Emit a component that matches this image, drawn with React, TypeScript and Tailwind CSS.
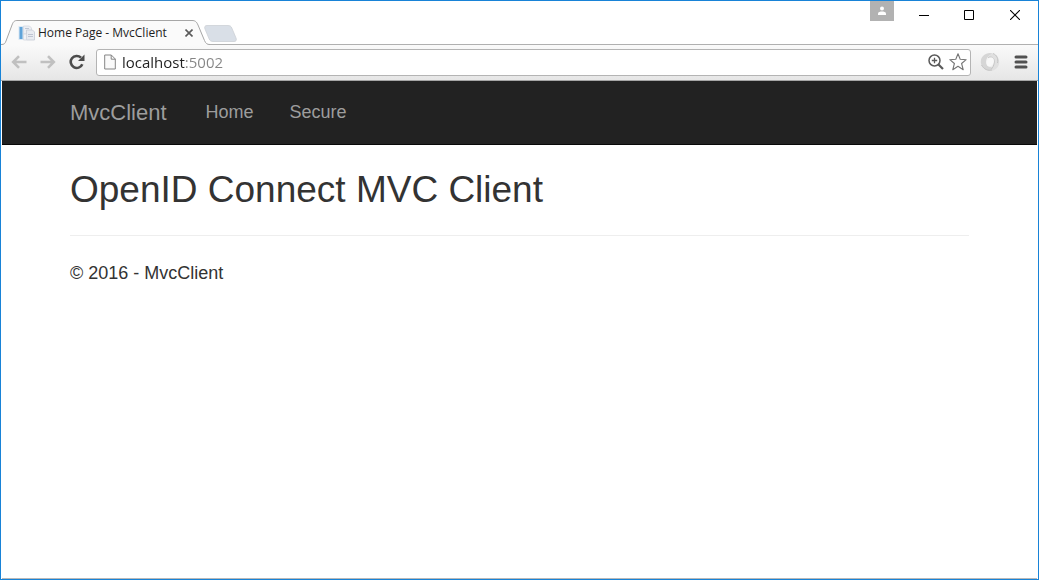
import type { ReactNode } from "react";

const navLinks = [
  { label: "Home", href: "#home" },
  { label: "Secure", href: "#secure" },
];

function ChromeButton({ label, className = "", children }: { label: string; className?: string; children: ReactNode }) {
  return (
    <button type="button" aria-label={label} className={`flex shrink-0 items-center justify-center ${className}`}>
      {children}
    </button>
  );
}

function WindowControls() {
  return (
    <div className="ml-auto flex h-full items-start">
      <ChromeButton label="Profile" className="mr-[7px] h-5 w-6 bg-[#b2b2b2]">
        <svg width="10" height="10" viewBox="0 0 10 10" fill="#fff">
          <circle cx="5" cy="2.6" r="2" />
          <path d="M1 9V7.4C1 6.2 3.4 5.6 5 5.6S9 6.2 9 7.4V9z" />
        </svg>
      </ChromeButton>
      <ChromeButton label="Minimize" className="h-7 w-[46px]">
        <svg width="10" height="10" viewBox="0 0 10 10" fill="none" stroke="#000">
          <path d="M0 5.5h10" />
        </svg>
      </ChromeButton>
      <ChromeButton label="Maximize" className="h-7 w-[45px]">
        <svg width="11" height="11" viewBox="0 0 11 11" fill="none" stroke="#000">
          <path d="M.5 .5h9v9h-9z" />
        </svg>
      </ChromeButton>
      <ChromeButton label="Close" className="h-7 w-[46px]">
        <svg width="10" height="10" viewBox="0 0 10 10" fill="none" stroke="#000" strokeWidth="1.1">
          <path d="M0 0l10 10M10 0l-10 10" />
        </svg>
      </ChromeButton>
    </div>
  );
}

function TabStrip() {
  return (
    <div className="relative z-10 -mb-px flex h-11 items-end">
      <div className="relative flex h-[25px] w-[209px] items-center pl-[17px] pr-[13px]">
        {/* slanted tab outline, open at the bottom so it joins the toolbar */}
        <svg className="absolute inset-0" width="209" height="25" viewBox="0 0 209 25" fill="none">
          <path
            d="M0 24.5C3.5 24.5 4 23.5 5 21L11 5C12.3 1.5 13.5 .5 16 .5H191C194 .5 195.5 1.5 197 5L203.5 20.5C204.8 23.5 206 24.5 209 24.5V25H0z"
            fill="#fafafa"
          />
          <path
            d="M0 24.5C3.5 24.5 4 23.5 5 21L11 5C12.3 1.5 13.5 .5 16 .5H191C194 .5 195.5 1.5 197 5L203.5 20.5C204.8 23.5 206 24.5 209 24.5"
            stroke="#a6a6a6"
          />
        </svg>
        <svg className="relative shrink-0" width="17" height="16" viewBox="0 0 17 16">
          <path d="M.5 1h4.500v14H.5z" fill="#dbe9f5" />
          <path d="M1.500 2h3v12h-3z" fill="#5fa3d9" />
          <path d="M5.5 1h6l2 2v6h-8z" fill="#eceef3" stroke="#d3d7e0" strokeWidth=".8" />
          <path d="M8.5 5h6l2 2v8h-8z" fill="#e8ebf1" stroke="#c5cad6" strokeWidth=".8" />
          <path d="M5.5 9h3v6h-3z" fill="#f1f3f7" stroke="#d3d7e0" strokeWidth=".8" />
          <path d="M7 3.5h4M10 9.5h5M10 11.5h5" stroke="#b9bfce" strokeWidth=".9" />
        </svg>
        <span className="relative ml-[3px] whitespace-nowrap font-['Open_Sans',sans-serif] text-[12px] leading-4 text-[#1e1e1e]">
          Home Page - MvcClient
        </span>
        <ChromeButton label="Close tab" className="relative ml-auto size-4">
          <svg width="8" height="8" viewBox="0 0 8 8" stroke="#5a5a5a" strokeWidth="1.6">
            <path d="M.5 .5l7 7M7.5 .5l-7 7" />
          </svg>
        </ChromeButton>
      </div>
      <ChromeButton label="New tab" className="-ml-[7px] mb-[3px]">
        <svg width="34" height="17" viewBox="0 0 34 17">
          <path
            d="M4 .5H25C27 .5 28 1.2 28.8 3L33 13C33.8 15 33.2 16.5 31 16.5H10C8 16.5 7 15.8 6.2 14L2 4C1.2 2 1.8 .5 4 .5z"
            fill="#d9dfe7"
            stroke="#cdd1d6"
            strokeWidth=".8"
          />
        </svg>
      </ChromeButton>
      <WindowControls />
    </div>
  );
}

function Toolbar() {
  return (
    <div className="flex h-[37px] items-center border-y border-t-[#b0b0b0] border-b-[#a6a6a6] bg-linear-to-b from-[#fafafa] to-[#e6e6e6] pl-[10px] pr-[9px]">
      <ChromeButton label="Back" className="h-[25px] w-4 pb-px">
        <svg width="16" height="14" viewBox="0 0 16 14" fill="none" stroke="#c0c0c0" strokeWidth="2.6">
          <path d="M15.5 7H2.5M8 1.2L2.2 7L8 12.8" />
        </svg>
      </ChromeButton>
      <ChromeButton label="Forward" className="ml-[13px] h-[25px] w-4 pb-px">
        <svg width="16" height="14" viewBox="0 0 16 14" fill="none" stroke="#c0c0c0" strokeWidth="2.6">
          <path d="M.5 7h13M8 1.2L13.8 7L8 12.8" />
        </svg>
      </ChromeButton>
      <ChromeButton label="Reload" className="ml-[13px] h-[25px] w-4 pb-px">
        <svg width="16" height="16" viewBox="0 0 16 16">
          <path d="M13.3 10.2A6 6 0 1 1 12 3.7" fill="none" stroke="#4c4c4c" strokeWidth="2.6" />
          <path d="M15.5 .5V7H9z" fill="#4c4c4c" />
        </svg>
      </ChromeButton>
      <form className="ml-[11px] flex h-[27px] min-w-0 flex-1 items-center rounded-[3px] border border-[#b4b4b4] bg-white pb-px pl-[7px] pr-[3px]">
        <svg className="shrink-0" width="12" height="16" viewBox="0 0 12 16" fill="#fafafa" stroke="#858585">
          <path d="M.7 1h6.6l4 4v10H.7z" />
          <path d="M7.2 1v4.2h4.1" fill="none" />
        </svg>
        {/* host in dark text, port in grey: a hard gradient stop clipped to the glyphs */}
        <input
          type="text"
          aria-label="Address"
          defaultValue="localhost:5002"
          className="ml-[6px] h-[22px] min-w-0 flex-1 bg-linear-to-r from-[#202020] from-[63px] to-[#858585] to-[63px] bg-clip-text font-['Open_Sans',sans-serif] text-[15px] leading-[22px] text-transparent outline-none"
        />
        <ChromeButton label="Zoom" className="size-[18px]">
          <svg width="16" height="16" viewBox="0 0 16 16" fill="none" stroke="#5a5a5a">
            <circle cx="6.5" cy="6.5" r="5.5" strokeWidth="1.5" />
            <path d="M3.8 6.5h5.4M6.5 3.8v5.4" strokeWidth="1.3" />
            <path d="M10.5 10.5l4.5 4.5" strokeWidth="2.2" />
          </svg>
        </ChromeButton>
        <ChromeButton label="Bookmark this page" className="ml-1 size-[18px]">
          <svg width="18" height="18" viewBox="0 0 18 18" fill="#fff" stroke="#757575" strokeWidth="1.1" strokeLinejoin="round">
            <path d="M9 .8L11.2 6.3L17.2 6.7L12.6 10.5L14.2 16.7L9 13.3L3.8 16.7L5.4 10.5L.8 6.7L6.8 6.3z" />
          </svg>
        </ChromeButton>
      </form>
      <ChromeButton label="Extension" className="ml-[9px] h-[21px] w-5 pb-px">
        <svg width="20" height="20" viewBox="0 0 20 20">
          {/* two interlocking crescents around a tilted hole */}
          <path d="M13 1.5C7 -.5 1 3.500 .8 9.500C.8 14 4 18 9 18.500C11 18 12.500 17 13 15.500C8.500 15.500 5.800 13 6 9.500C6.200 6 9 3 13 1.500z" fill="#d6d6d6" />
          <path d="M9 18.800C15 19.500 19.200 15 19.200 10.500C19.200 6 16.500 2.500 13 1.500C10.500 2.500 8.500 4 8 5.500C12 4 14.500 6.500 14.300 10C14 14 12.500 17 9 18.800z" fill="#e0e0e0" />
          <path d="M8 5.5C12 4 14.500 6.500 14.300 10C14 13 13 15.500 11 17.500M1.500 13C4 17.500 8 19 12 18M13 1.500C17 3 18.500 7 17.500 11" fill="none" stroke="#c2c2c2" strokeWidth=".9" />
          <ellipse cx="10.2" cy="10" rx="3.4" ry="4.8" transform="rotate(25 10.2 10)" fill="#f8f8f8" />
        </svg>
      </ChromeButton>
      <ChromeButton label="Menu" className="ml-[14px] h-[21px] w-[14px] mr-px pb-px">
        <svg width="14" height="14" viewBox="0 0 14 14" stroke="#515151" strokeWidth="3" strokeLinecap="round">
          <path d="M2 2h10M2 7h10M2 12h10" />
        </svg>
      </ChromeButton>
    </div>
  );
}

function Page() {
  return (
    <div className="mx-px flex-1 font-['Liberation_Sans',Arial,sans-serif] text-[18px] leading-[25px] text-[#333]">
      <nav className="border-b border-[#080808] bg-[#222] text-[#9d9d9d]">
        <div className="flex h-[63px] items-center px-[68px]">
          <a href="#top" className="text-[22px]">
            MvcClient
          </a>
          <div className="ml-[39px] flex gap-9">
            {navLinks.map(({ label, href }) => (
              <a key={label} href={href}>
                {label}
              </a>
            ))}
          </div>
        </div>
      </nav>
      <div className="px-[68px]">
        <h1 className="pt-6 text-[37px] leading-[42px]">OpenID Connect MVC Client</h1>
        <hr className="mt-6 border-[#eee]" />
        <footer className="pt-[25px]">
          <p>© 2016 - MvcClient</p>
        </footer>
      </div>
    </div>
  );
}

export default function App() {
  return (
    <div className="flex min-h-screen flex-col border border-[#1883d7] bg-white">
      <TabStrip />
      <Toolbar />
      <Page />
      <div className="mx-px h-px bg-[#b8b8b8]" />
    </div>
  );
}
